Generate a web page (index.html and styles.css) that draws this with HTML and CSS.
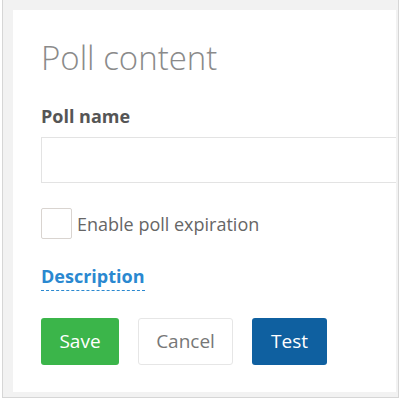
FILE: index.html
```html
<!DOCTYPE html>
<html lang="en">
<head>
    <meta charset="UTF-8">
    <title>Poll content</title>
    <link rel="stylesheet" href="styles.css">
</head>
<body>
    <div class="frame">
        <div class="panel">
            <h1>Poll content</h1>

            <label class="field-label" for="poll-name">Poll name</label>
            <input type="text" id="poll-name" class="text-input">

            <label class="check-row">
                <span class="check-box"></span>
                <span class="check-text">Enable poll expiration</span>
            </label>

            <a class="desc-link">Description</a>

            <div class="actions">
                <button class="btn btn-save">Save</button>
                <button class="btn btn-cancel">Cancel</button>
                <button class="btn btn-test">Test</button>
            </div>
        </div>
    </div>
</body>
</html>
```

FILE: styles.css
```css
body {
    font-family: "Open Sans", Arial, sans-serif;
    margin: 0;
    padding: 0;
    background-color: #fff;
    overflow: hidden;
}

.frame {
    margin-left: 2px;
    width: 397px;
    height: 398px;
    box-sizing: border-box;
    background-color: #f2f2f2;
    border: 1px solid #d6d6d6;
    border-top: none;
    padding: 10px 2px 5px 10px;
}

.panel {
    background-color: #fff;
    height: 100%;
    box-sizing: border-box;
    padding: 28px 0 0 28px;
    overflow: hidden;
}

h1 {
    font-weight: 300;
    font-size: 33px;
    color: #8a8a8a;
    margin: 0 0 26px 0;
    line-height: 40px;
}

.field-label {
    display: block;
    font-weight: bold;
    font-size: 18px;
    line-height: 24px;
    color: #555;
    margin-bottom: 9px;
}

.text-input {
    display: block;
    width: 400px;
    height: 46px;
    box-sizing: border-box;
    border: 1px solid #e3e3e3;
    margin: 0 0 25px 0;
}

.check-row {
    display: flex;
    align-items: center;
    gap: 5px;
}

.check-box {
    width: 31px;
    height: 31px;
    box-sizing: border-box;
    border: 1px solid #d9d4d0;
    border-radius: 2px;
}

.check-text {
    font-size: 18px;
    line-height: 24px;
    color: #666;
}

.desc-link {
    display: inline-block;
    margin-top: 25px;
    font-weight: bold;
    font-size: 18px;
    line-height: 24px;
    color: #2a88d0;
    border-bottom: 1px dashed #2a88d0;
    padding-bottom: 2px;
    cursor: pointer;
}

.actions {
    display: flex;
    gap: 19px;
    margin-top: 27px;
}

.btn {
    font-family: "Open Sans", Arial, sans-serif;
    font-size: 19px;
    height: 47px;
    padding: 0 0 2px 0;
    border-radius: 3px;
    border: 1px solid transparent;
    cursor: pointer;
}

.btn-save {
    width: 78px;
    background-color: #3bb54a;
    color: #fff;
}

.btn-cancel {
    width: 95px;
    background-color: #fff;
    color: #777;
    border-color: #e6e6e6;
}

.btn-test {
    width: 75px;
    background-color: #0f60a0;
    color: #fff;
}
```
